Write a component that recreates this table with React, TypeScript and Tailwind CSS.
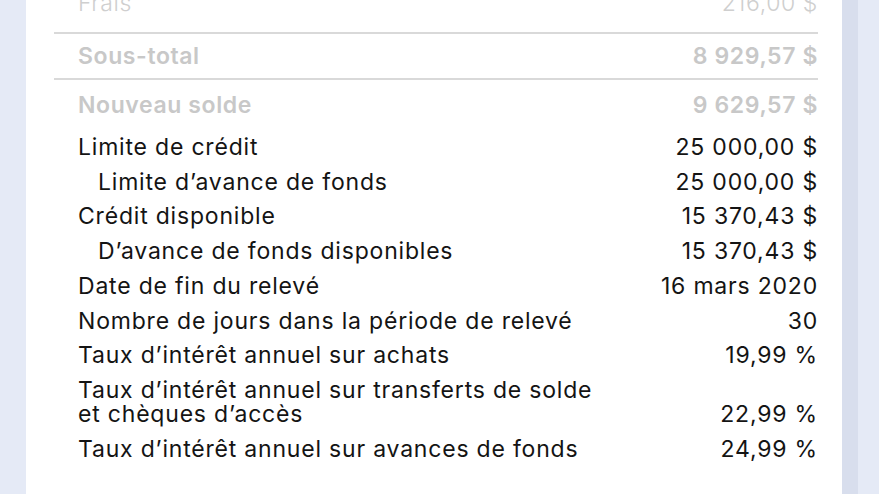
import React from 'react';

type Row = { label: string; value: string; indent?: boolean };

const rows: Row[] = [
  { label: 'Limite de crédit', value: '25 000,00 $' },
  { label: 'Limite d’avance de fonds', value: '25 000,00 $', indent: true },
  { label: 'Crédit disponible', value: '15 370,43 $' },
  { label: 'D’avance de fonds disponibles', value: '15 370,43 $', indent: true },
  { label: 'Date de fin du relevé', value: '16 mars 2020' },
  { label: 'Nombre de jours dans la période de relevé', value: '30' },
  { label: 'Taux d’intérêt annuel sur achats', value: '19,99 %' },
];

const App: React.FC = () => {
  return (
    <div
      className="flex h-[494px] w-full overflow-hidden bg-[#e5eaf6]"
      style={{ fontFamily: 'Inter, "Noto Sans", sans-serif' }}
    >
      <div className="w-[26px] shrink-0 bg-[#e5eaf6]" />

      {/* Relevé */}
      <div className="flex-1 bg-white pl-[28px] pr-[24px]">
        <div className="-mt-[14px]">
          {/* Sommaire grisé */}
          <div className="flex justify-between border-b-2 border-[#d9d9d9] pb-[12px] pl-[24px] text-[23px] font-light leading-[34px] tracking-[0.6px] text-[#cfcfcf]">
            <span>Frais</span>
            <span>216,00 $</span>
          </div>
          <div className="flex justify-between border-b-2 border-[#d9d9d9] py-[5px] pl-[24px] text-[23px] font-semibold leading-[34px] tracking-[0.6px] text-[#c8c8c8]">
            <span>Sous-total</span>
            <span>8 929,57 $</span>
          </div>
          <div className="flex justify-between pb-[8px] pl-[24px] pt-[8px] text-[23px] font-semibold leading-[34px] tracking-[0.6px] text-[#c8c8c8]">
            <span>Nouveau solde</span>
            <span>9 629,57 $</span>
          </div>

          {/* Détails du compte */}
          <div className="pl-[24px] text-[23px] leading-[34.7px] tracking-[0.8px] text-[#141414]">
            {rows.map((r) => (
              <div key={r.label} className="flex justify-between">
                <span className={r.indent ? 'pl-[20px]' : ''}>{r.label}</span>
                <span>{r.value}</span>
              </div>
            ))}
            <div className="flex items-end justify-between py-[5.5px] leading-[24px]">
              <span>
                Taux d’intérêt annuel sur transferts de solde
                <br />
                et chèques d’accès
              </span>
              <span>22,99 %</span>
            </div>
            <div className="flex justify-between">
              <span>Taux d’intérêt annuel sur avances de fonds</span>
              <span>24,99 %</span>
            </div>
          </div>
        </div>
      </div>

      <div className="w-[16px] shrink-0 bg-[#d8deed]" />
      <div className="w-[21px] shrink-0 bg-[#e5eaf6]" />
    </div>
  );
};

export default App;
